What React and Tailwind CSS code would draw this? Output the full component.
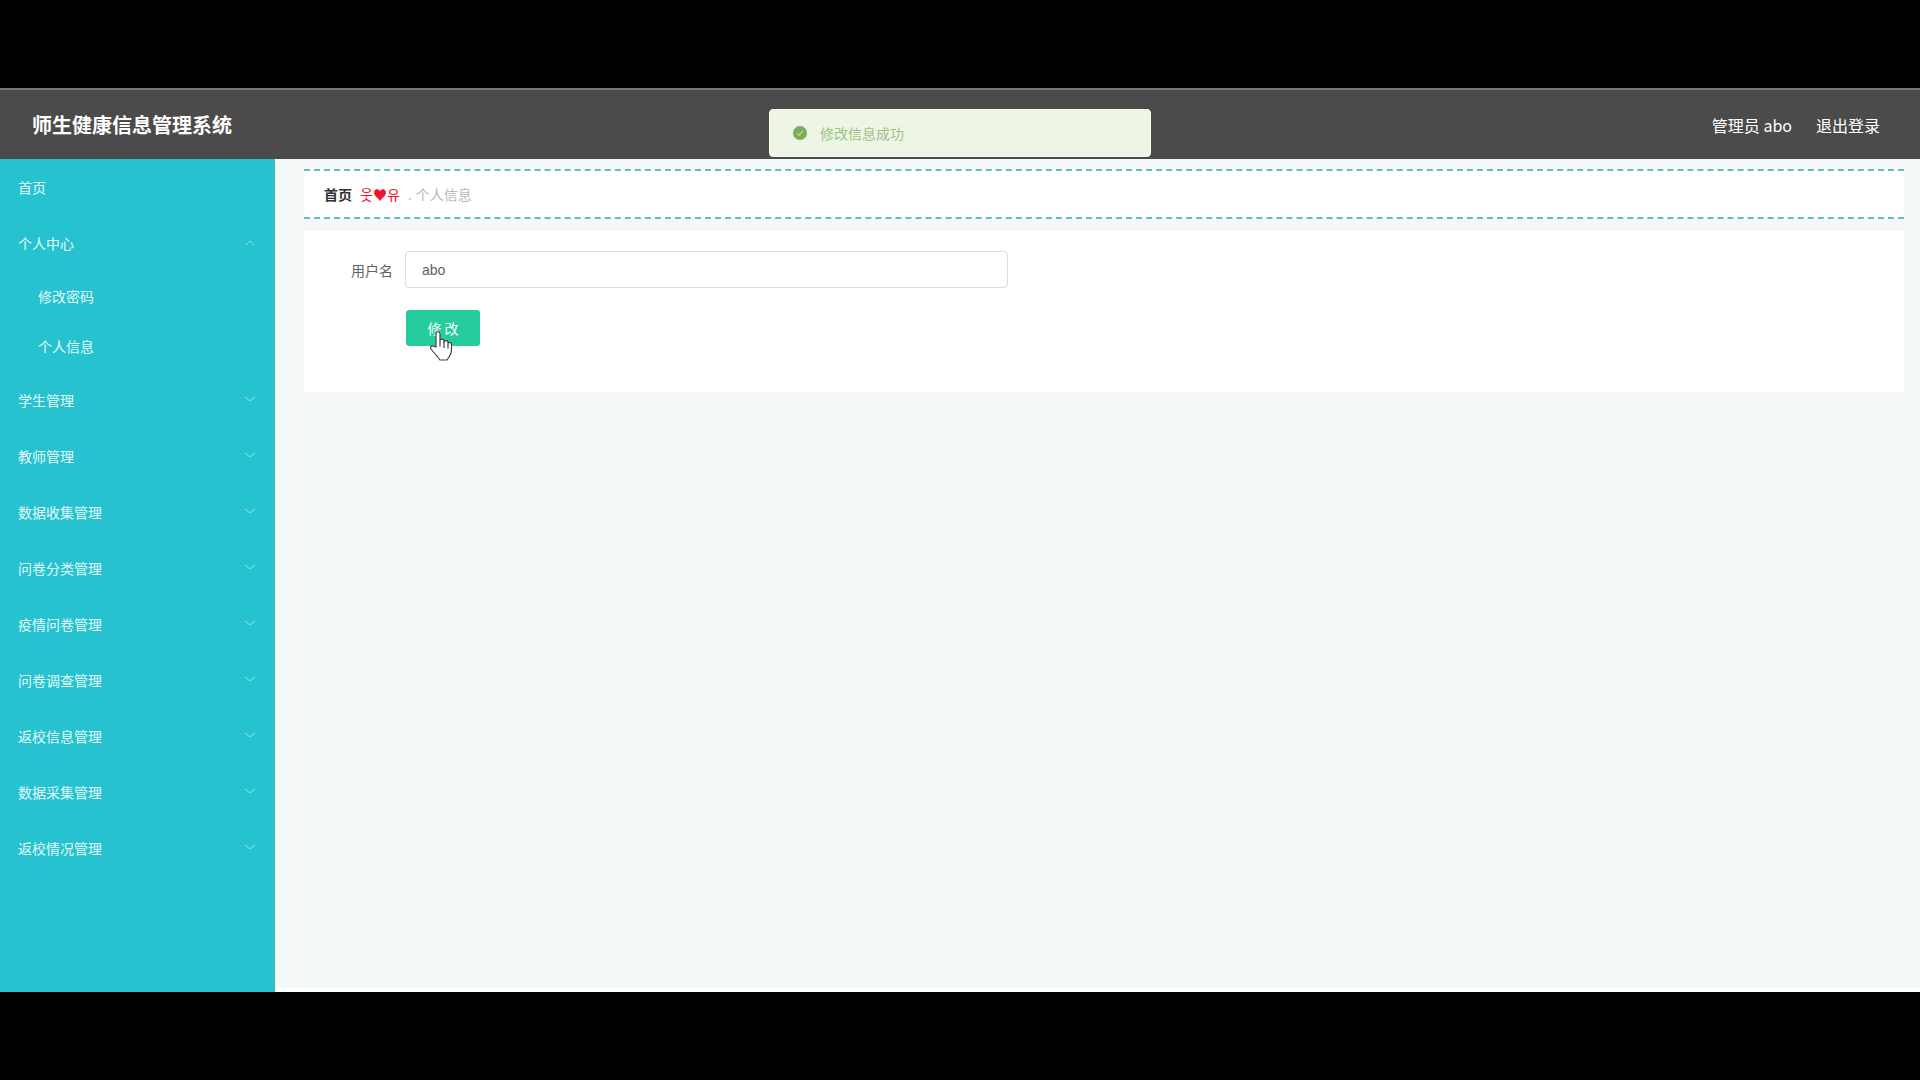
import { useState } from 'react';

const menus = [
  { name: '个人中心', children: ['修改密码', '个人信息'] },
  { name: '学生管理' },
  { name: '教师管理' },
  { name: '数据收集管理' },
  { name: '问卷分类管理' },
  { name: '疫情问卷管理' },
  { name: '问卷调查管理' },
  { name: '返校信息管理' },
  { name: '数据采集管理' },
  { name: '返校情况管理' },
];

function Arrow({ up }) {
  return (
    <svg width="12" height="12" viewBox="0 0 12 12" fill="none" stroke="#8fe3e8" strokeWidth="1">
      <path d={up ? 'M2 8l4-4 4 4' : 'M1 3l5 4 5-4'} />
    </svg>
  );
}

function HandCursor() {
  return (
    <svg
      className="absolute left-6 top-5 pointer-events-none"
      width="24"
      height="32"
      viewBox="0 0 24 32"
      fill="#fff"
      stroke="#444"
      strokeWidth="1.2"
      strokeLinejoin="round"
    >
      <path d="M6 17V4c0-3 4-3 4 0v7c0-2.500 4-2.500 4 0v1.500c0-2.500 4-2.500 4 0V14c0-2.200 3.500-2.200 3.500.5V20c0 3-1 5-2.500 7l-2 3h-7L7 26c-2-2-4-4.500-6-7-1.500-2.500 1-4 3-2.500z" />
      <path d="M10 11v5.500M14 12v6M18 14v4.500" fill="none" />
    </svg>
  );
}

export default function App() {
  const [username, setUsername] = useState('abo');
  const [opened, setOpened] = useState('个人中心');

  return (
    <div className="min-h-screen flex flex-col bg-black py-[88px] text-sm font-['Noto_Sans_CJK_SC',sans-serif]">
      {/* Header */}
      <header className="relative h-[71px] shrink-0 flex items-center justify-between px-8 pr-10 bg-[#4b4b4b] border-t-2 border-[#777] text-white">
        <h1 className="text-xl font-bold">师生健康信息管理系统</h1>
        <div className="flex items-center gap-6 text-base">
          <span>管理员 abo</span>
          <button type="button" className="cursor-pointer">退出登录</button>
        </div>

        {/* Success message */}
        <div
          role="status"
          className="absolute left-1/2 top-[19px] -translate-x-1/2 w-[382px] h-12 flex items-center gap-3 pl-[22px] rounded-sm bg-[#edf5e5] border border-[#f6faf0] text-[#9fc386]"
        >
          <svg width="16" height="16" viewBox="0 0 16 16">
            <circle cx="8" cy="8" r="7" fill="#7dac55" />
            <path d="M5 8l2.200 2.200L11 6" fill="none" stroke="#b4d494" strokeWidth="1.500" />
          </svg>
          <p>修改信息成功</p>
        </div>
      </header>

      <div className="flex-1 flex">
        {/* Sidebar */}
        <nav className="w-[275px] shrink-0 bg-[#26c2cf] border-r border-[#3fb89a] text-[#e4fbfc]">
          <a href="#home" className="h-14 px-[18px] flex items-center">首页</a>
          {menus.map((menu) => (
            <div key={menu.name}>
              <button
                type="button"
                aria-expanded={opened === menu.name}
                onClick={() => setOpened(opened === menu.name ? '' : menu.name)}
                className="w-full h-14 px-[18px] flex items-center justify-between cursor-pointer"
              >
                {menu.name}
                <Arrow up={opened === menu.name} />
              </button>
              {menu.children && opened === menu.name && (
                <div className="pb-px">
                  {menu.children.map((child) => (
                    <a key={child} href={`#${child}`} className="h-[50px] pl-[38px] flex items-center">
                      {child}
                    </a>
                  ))}
                </div>
              )}
            </div>
          ))}
        </nav>

        {/* Content */}
        <main className="flex-1 bg-[#f5f8f8] border-l border-b-4 border-white pl-7 pr-4 pt-[10px]">
          <div className="h-[50px] mb-3 px-5 flex items-center bg-white border-y-2 border-dashed border-[#63bcc0]">
            <a href="#home" className="font-bold text-[#303133]">首页</a>
            <span className="mx-2 text-[#f5112b] font-['Noto_Sans_CJK_KR',sans-serif]">웃♥유</span>
            <span className="text-[#c0c4cc]">.</span>
            <span className="ml-1 text-[#b4b8be]">个人信息</span>
          </div>

          <form className="bg-white h-[161px] pt-5" onSubmit={(e) => e.preventDefault()}>
            <div className="flex items-center">
              <label htmlFor="username" className="w-[101px] pr-3 text-right text-[#606266]">用户名</label>
              <input
                id="username"
                type="text"
                value={username}
                onChange={(e) => setUsername(e.target.value)}
                className="w-[603px] h-[37px] px-4 rounded-sm border border-[#d3dfe1] bg-white text-[#606266] outline-none font-['Liberation_Sans',sans-serif]"
              />
            </div>
            <div className="relative w-fit ml-[102px] mt-[22px]">
              <button type="submit" className="w-[74px] h-9 rounded-[3px] bg-[#26cc9d] text-white cursor-pointer">
                修 改
              </button>
              <HandCursor />
            </div>
          </form>
        </main>
      </div>
    </div>
  );
}
